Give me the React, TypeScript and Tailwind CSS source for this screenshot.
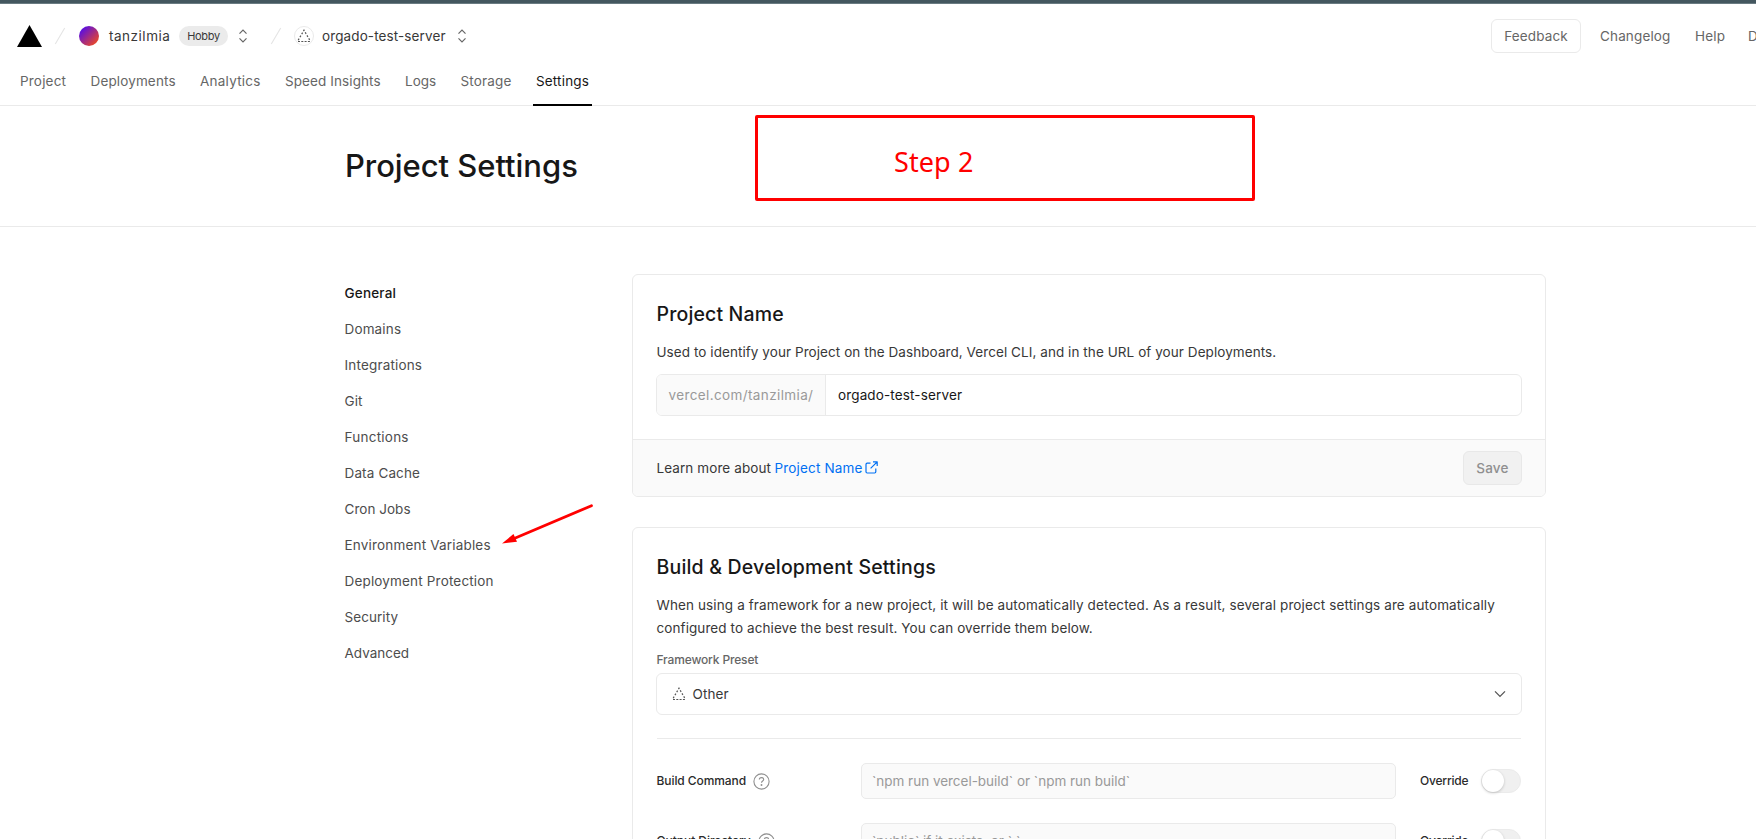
import type { ReactNode } from 'react';

function DashedTriangle({ size }: { size: number }) {
  return (
    <svg width={size} height={size} viewBox="0 0 14 14" fill="none" stroke="#555" strokeWidth="1.2" className="shrink-0">
      <path d="M1 12.5H13.2" strokeDasharray="2 1.3" />
      <path d="M1.2 11.2L7 1.2L12.8 11.2" strokeDasharray="1.8 1.7" />
    </svg>
  );
}

function Slash() {
  return (
    <svg width="12" height="18" viewBox="0 0 12 18" stroke="#e4e4e4" strokeWidth="1.1" className="shrink-0">
      <path d="M10.7 1L1.3 17" />
    </svg>
  );
}

function UpDown() {
  return (
    <svg width="10" height="14" viewBox="0 0 10 14" fill="none" stroke="#666" strokeWidth="1.2" className="shrink-0">
      <path d="M1.5 4.7L5 1.2L8.5 4.7M1.5 9.3L5 12.8L8.5 9.3" />
    </svg>
  );
}

function Help() {
  return (
    <svg width="17" height="17" viewBox="0 0 17 17" fill="none" stroke="#8f8f8f" strokeWidth="1.1" className="ml-[7px] shrink-0">
      <circle cx="8.5" cy="8.5" r="7.6" />
      <path d="M6.3 6.6C6.3 5.3 7.3 4.6 8.5 4.6S10.7 5.4 10.7 6.5C10.7 8 8.5 8.1 8.5 9.8" />
      <circle cx="8.5" cy="12" r="0.5" fill="#8f8f8f" stroke="none" />
      <circle cx="8.5" cy="12" r="0.4" />
    </svg>
  );
}

const tabs: [string, string][] = [
  ['Project', 'w-[70.5px] tracking-[0.19px]'],
  ['Deployments', 'w-[109.5px] tracking-[0.14px]'],
  ['Analytics', 'w-[85px] tracking-[0.24px]'],
  ['Speed Insights', 'w-[120px] tracking-[0.09px]'],
  ['Logs', 'w-[55.5px]'],
  ['Storage', 'w-[75.5px] tracking-[0.17px]'],
];

const sections: [string, string][] = [
  ['Domains', 'tracking-[0.15px]'],
  ['Integrations', 'tracking-[0.17px]'],
  ['Git', 'tracking-[0.12px]'],
  ['Functions', 'tracking-[0.24px]'],
  ['Data Cache', 'tracking-[0.14px]'],
  ['Cron Jobs', 'tracking-[0.03px]'],
  ['Environment Variables', 'tracking-[0.18px]'],
  ['Deployment Protection', 'tracking-[0.17px]'],
  ['Security', 'tracking-[0.06px]'],
  ['Advanced', ''],
];

function CommandRow({ label, placeholder }: { label: string; placeholder: ReactNode }) {
  return (
    <div className="flex h-9 items-center">
      <div className="flex w-[205px] items-center pl-[0.5px] text-[12px] font-medium tracking-[-0.08px] text-[#2b2b2b]">
        {label}
        <Help />
      </div>
      <div className="flex h-9 w-[535px] items-center rounded-[5px] border border-[#eaeaea] bg-[#fafafa] px-[10px] text-[#999] tracking-[-0.02px]">
        {placeholder}
      </div>
      <span className="ml-6 w-[61px] text-[12px] font-medium tracking-[-0.2px] text-[#2b2b2b]">Override</span>
      <div className="h-6 w-10 rounded-full border border-[#ebebeb] bg-[#f0f0f0]">
        <div className="size-[22px] rounded-full bg-white shadow-[0_1px_3px_rgba(0,0,0,0.2)]" />
      </div>
    </div>
  );
}

export default function App() {
  return (
    <div className="relative h-[839px] w-[1756px] overflow-hidden bg-white font-[Inter,sans-serif] text-[13.5px] leading-5 text-[#383838]">
      <div className="h-1 border-b border-[#6a7b82] bg-[#44575f]" />
      <header className="flex h-[102px] flex-col border-b border-[#eaeaea]">
        <div className="flex h-16 items-center pl-[17px]">
          <svg width="25" height="22" viewBox="0 0 25 22">
            <path d="M12.5 0L25 22H0Z" fill="#000" />
          </svg>
          <div className="ml-3 flex items-center">
            <Slash />
          </div>
          <div className="ml-[13px] size-5 rounded-full bg-[linear-gradient(135deg,#5a0fe0_15%,#f04a20_90%)]" />
          <span className="ml-[10px] w-[61px] tracking-[0.52px]">tanzilmia</span>
          <span className="ml-[9px] flex h-5 w-[49px] items-center justify-center rounded-full bg-[#ebebeb] text-[11px] tracking-[-0.3px]">Hobby</span>
          <div className="ml-[10px]">
            <UpDown />
          </div>
          <div className="ml-[22px]">
            <Slash />
          </div>
          <div className="ml-[12px] flex size-5 items-center justify-center rounded-full border border-[#eaeaea]">
            <DashedTriangle size={14} />
          </div>
          <span className="ml-[8px] w-[124px] whitespace-nowrap tracking-[0.11px]">orgado-test-server</span>
          <div className="ml-[11px]">
            <UpDown />
          </div>
          <div className="ml-auto flex shrink-0 items-center text-[#666]">
            <div className="flex h-[34px] w-[90px] items-center justify-center rounded-[6px] border border-[#eaeaea] tracking-[0.13px]">Feedback</div>
            <span className="ml-[19px] w-[95px] tracking-[0.15px]">Changelog</span>
            <span className="w-[53px] tracking-[0.18px]">Help</span>
            <span className="w-[8px] overflow-hidden">Docs</span>
          </div>
        </div>
        <nav className="-mb-px flex h-[38px] items-start pl-5 text-[#666]">
          {tabs.map(([name, cls]) => (
            <span key={name} className={`pt-[3.4px] whitespace-nowrap ${cls}`}>
              {name}
            </span>
          ))}
          <span className="-ml-[3px] flex h-[38px] w-[59px] shrink-0 justify-center border-b-2 border-black pt-[3.4px] tracking-[0.18px] text-[#171717]">Settings</span>
        </nav>
      </header>

      <div className="flex h-[121px] items-center border-b border-[#eaeaea] pl-[345px]">
        <h1 className="text-[31px] leading-10 font-medium tracking-[-0.05px] text-[#171717]">Project Settings</h1>
      </div>

      <div className="flex pt-[47px] pl-[344.5px]">
        <aside className="flex w-[287.5px] shrink-0 flex-col pt-px text-[#4d4d4d]">
          <span className="flex h-9 items-center font-medium tracking-[0.2px] text-[#171717]">General</span>
          {sections.map(([name, cls]) => (
            <span key={name} className={`flex h-9 items-center ${cls}`}>
              {name}
            </span>
          ))}
        </aside>

        <main className="flex w-[914px] flex-col gap-[30px]">
          <section className="overflow-hidden rounded-[6px] border border-[#eaeaea]">
            <div className="h-[164px] px-[23px] pt-[23px]">
              <h2 className="pl-[0.5px] text-[19.5px] leading-8 font-medium tracking-[0.15px] text-[#171717]">Project Name</h2>
              <p className="mt-[11px] pl-[0.5px] leading-[23px] tracking-[0.067px]">
                Used to identify your Project on the Dashboard, Vercel CLI, and in the URL of your Deployments.
              </p>
              <div className="mt-[10px] flex h-[42px] overflow-hidden rounded-[6px] border border-[#eaeaea]">
                <span className="flex w-[169px] items-center border-r border-[#eaeaea] bg-[#fafafa] pl-[11.5px] tracking-[0.38px] text-[#999]">vercel.com/tanzilmia/</span>
                <span className="flex items-center pl-3 tracking-[0.14px] text-[#171717]">orgado-test-server</span>
              </div>
            </div>
            <div className="flex h-[57px] items-center border-t border-[#eaeaea] bg-[#fafafa] pr-[23px] pb-px pl-[23.5px]">
              <span className="w-[118px] whitespace-nowrap tracking-[0.09px]">Learn more about</span>
              <span className="tracking-[0.17px] text-[#0070f3]">Project Name</span>
              <svg width="13" height="13" viewBox="0 0 13 13" fill="none" stroke="#0070f3" strokeWidth="1.2" strokeLinejoin="round" className="ml-[2px]">
                <path d="M5.5 2.2H2.2Q1 2.2 1 3.4V10.8Q1 12 2.2 12H9.6Q10.8 12 10.8 10.8V7.5M8 0.8H12.2V5M12.2 0.8L5.6 7.4" />
              </svg>
              <button className="ml-auto h-[34px] w-[59px] rounded-[6px] border border-[#e8e8e8] bg-[#f1f1f1] font-medium tracking-[0.2px] text-[#8f8f8f]">Save</button>
            </div>
          </section>

          <section className="h-[400px] rounded-[6px] border border-[#eaeaea] px-[23px] pt-[23px]">
            <h2 className="pl-[0.5px] text-[19.5px] leading-8 font-medium tracking-[0.19px] text-[#171717]">Build &amp; Development Settings</h2>
            <div className="mt-[11px] pl-[0.5px] leading-[23px] whitespace-nowrap">
              <p className="tracking-[0.116px]">
                When using a framework for a new project, it will be automatically detected. As a result, several project settings are automatically
              </p>
              <p className="tracking-[0.087px]">configured to achieve the best result. You can override them below.</p>
            </div>
            <div className="mt-[10px] pl-[0.5px] text-[12px] font-medium tracking-[-0.15px] text-[#666]">Framework Preset</div>
            <div className="mt-[3px] flex h-[42px] items-center rounded-[6px] border border-[#eaeaea] px-[15px]">
              <DashedTriangle size={14} />
              <span className="ml-[6.5px] tracking-[0.08px]">Other</span>
              <svg width="12" height="8" viewBox="0 0 12 8" fill="none" stroke="#555" strokeWidth="1.3" className="ml-auto">
                <path d="M1 1.4L6 6.4L11 1.4" />
              </svg>
            </div>
            <div className="mt-[23px] mr-px ml-px h-px bg-[#eaeaea]" />
            <div className="mt-6 flex flex-col gap-6">
              <CommandRow label="Build Command" placeholder="`npm run vercel-build` or `npm run build`" />
              <CommandRow label="Output Directory" placeholder="`public` if it exists, or `.`" />
            </div>
          </section>
        </main>
      </div>

      <div className="absolute top-[115px] left-[755px] flex h-[86px] w-[500px] rounded-[2px] border-[3px] border-[#f00] pt-[26px] pl-[136px] font-['Noto_Sans','Open_Sans',sans-serif] text-[27px] leading-[36px] font-normal tracking-[0.1px] text-[#f00]">
        Step 2
      </div>
      <svg className="absolute top-[500px] left-[498px]" width="100" height="50" viewBox="0 0 100 50">
        <path d="M93.5 5.7L15 39" stroke="#f00" strokeWidth="2.8" strokeLinecap="round" />
        <path d="M4 43.5L15.5 34L19 41.8Z" fill="#f00" />
      </svg>
    </div>
  );
}
